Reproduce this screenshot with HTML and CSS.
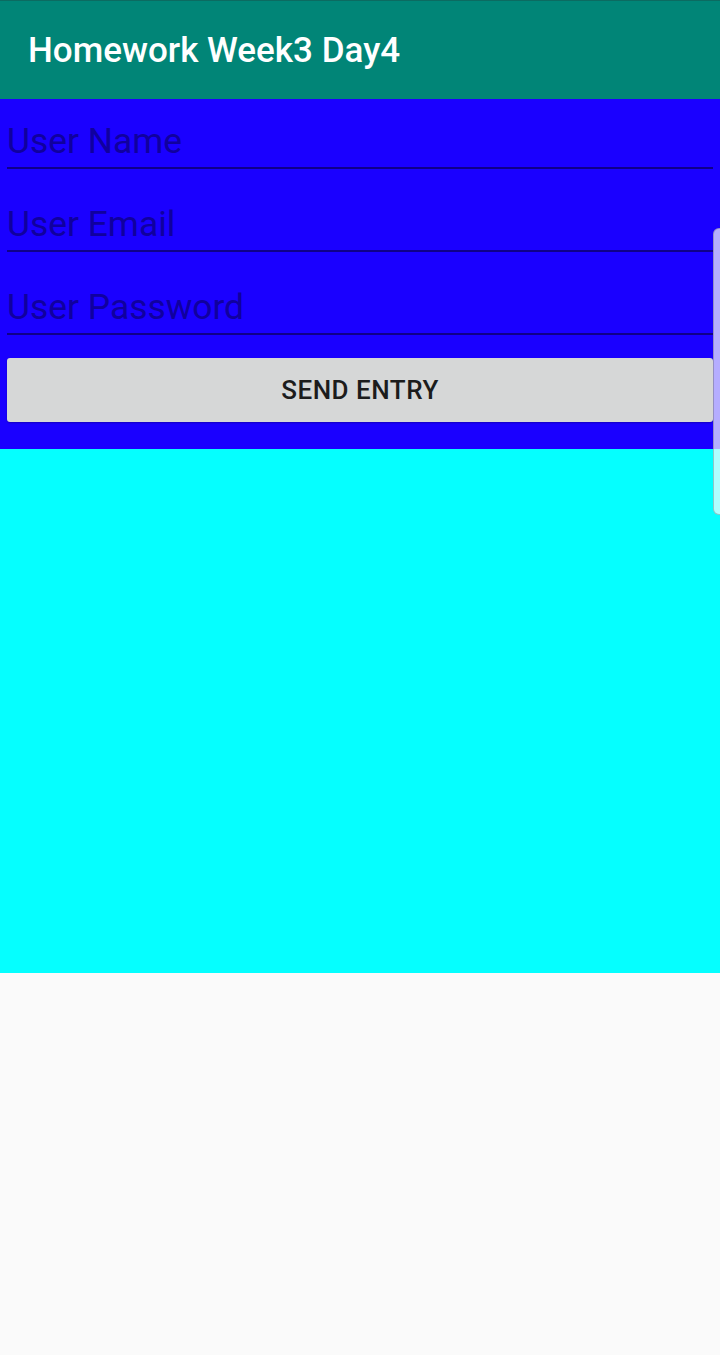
FILE: index.html
```html
<!DOCTYPE html>
<html>
<head>
<meta charset="utf-8">
<link rel="stylesheet" href="styles.css">
</head>
<body>
<header class="appbar">
  <h1 class="title">Homework Week3 Day4</h1>
</header>
<main class="form">
  <div class="field"><input class="input" type="text" placeholder="User Name"></div>
  <div class="field"><input class="input" type="email" placeholder="User Email"></div>
  <div class="field"><input class="input" type="password" placeholder="User Password"></div>
  <button class="send">SEND ENTRY</button>
</main>
<section class="panel"></section>
<div class="scrollbar"></div>
</body>
</html>
```

FILE: styles.css
```css
html, body {
  margin: 0;
  padding: 0;
}
body {
  background: #fafafa;
  font-family: Roboto, "Noto Sans", sans-serif;
  width: 720px;
  height: 1355px;
  overflow: hidden;
  position: relative;
}
.appbar {
  height: 98px;
  border-top: 1px solid #0c6b61;
  background: #018577;
  display: flex;
  align-items: center;
  padding-left: 28px;
  box-sizing: content-box;
}
.title {
  margin: 0;
  color: #ffffff;
  font-weight: 500;
  font-size: 35px;
  letter-spacing: 0;
}
.form {
  background: #1a00ff;
  padding: 0 7px 27px 7px;
  display: flex;
  flex-direction: column;
}
.field {
  height: 70px;
  margin-top: 13px;
  display: flex;
  align-items: flex-end;
  border-bottom: 2px solid #0f0088;
  box-sizing: border-box;
}
.field:first-child {
  margin-top: 0;
}
.input {
  width: 100%;
  border: none;
  outline: none;
  background: transparent;
  font-family: Roboto, "Noto Sans", sans-serif;
  font-size: 35.4px;
  padding: 0 0 5px 0;
  margin: 0;
  color: #10009e;
}
.input::placeholder {
  color: #10009e;
  opacity: 1;
}
.send {
  margin-top: 23px;
  height: 64px;
  border: none;
  border-radius: 3px;
  background: #d6d7d7;
  color: #1c1c1c;
  font-family: Roboto, "Noto Sans", sans-serif;
  font-weight: 500;
  font-size: 26px;
  letter-spacing: 0.5px;
  box-shadow: 0 1px 2px rgba(0,0,0,0.25);
}
.panel {
  height: 524px;
  background: #05ffff;
}
.scrollbar {
  position: absolute;
  right: 0;
  top: 228px;
  width: 6px;
  height: 285px;
  border-radius: 6px 0 0 6px;
  background: rgba(255,255,255,0.68);
  border: 1px solid rgba(90,90,90,0.35);
  border-right: none;
}
```
